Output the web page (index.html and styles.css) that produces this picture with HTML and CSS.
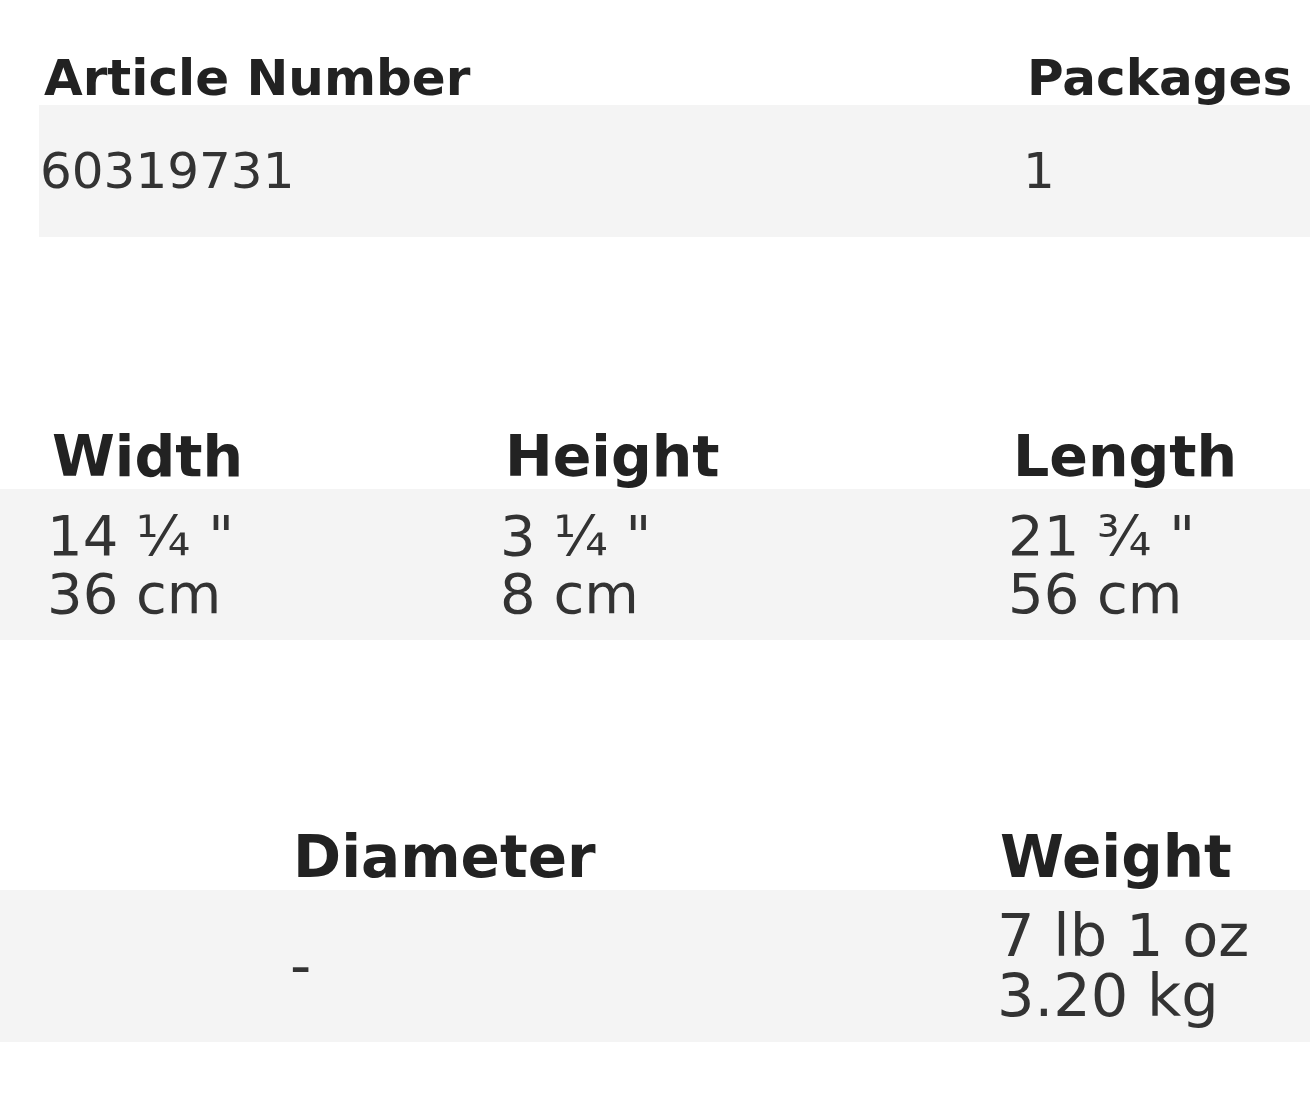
FILE: index.html
```html
<!DOCTYPE html>
<html lang="en">
<head>
<meta charset="utf-8">
<title>Product dimensions</title>
<link rel="stylesheet" href="styles.css">
</head>
<body>
<main class="specs">
  <section class="spec spec-article">
    <div class="row head">
      <div class="cell">Article Number</div>
      <div class="cell">Packages</div>
    </div>
    <div class="row vals">
      <div class="cell">60319731</div>
      <div class="cell">1</div>
    </div>
  </section>

  <section class="spec spec-dims">
    <div class="row head">
      <div class="cell">Width</div>
      <div class="cell">Height</div>
      <div class="cell">Length</div>
    </div>
    <div class="row vals">
      <div class="cell">14 ¼ "<br>36 cm</div>
      <div class="cell">3 ¼ "<br>8 cm</div>
      <div class="cell">21 ¾ "<br>56 cm</div>
    </div>
  </section>

  <section class="spec spec-weight">
    <div class="row head">
      <div class="cell"></div>
      <div class="cell">Diameter</div>
      <div class="cell">Weight</div>
    </div>
    <div class="row vals">
      <div class="cell"></div>
      <div class="cell">-</div>
      <div class="cell">7 lb 1 oz<br>3.20 kg</div>
    </div>
  </section>
</main>
</body>
</html>
```

FILE: styles.css
```css
html, body {
  margin: 0;
  padding: 0;
  background: #ffffff;
}

body {
  font-family: "DejaVu Sans", Verdana, sans-serif;
  color: #333333;
}

.specs {
  display: flex;
  flex-direction: column;
  padding-top: 53px;
}

.row {
  display: grid;
}

.head .cell {
  font-weight: bold;
  color: #222222;
  line-height: 1;
}

.vals {
  background: #f4f4f4;
}

/* Section 1: article number / packages */
.spec-article {
  margin-left: 39px;
}
.spec-article .row {
  grid-template-columns: 983px 1fr;
}
.spec-article .head {
  font-size: 50px;
  margin-bottom: 2px;
}
.spec-article .head .cell {
  padding-left: 5px;
}
.spec-article .vals {
  font-size: 50px;
  line-height: 1;
  padding: 41px 0;
  align-items: center;
}
.spec-article .vals .cell {
  padding-left: 1px;
}

/* Section 2: width / height / length */
.spec-dims {
  margin-top: 191px;
}
.spec-dims .row {
  grid-template-columns: 44px 453px 508px 1fr;
}
.spec-dims .row::before {
  content: "";
}
.spec-dims .head {
  font-size: 57px;
  margin-bottom: 4px;
}
.spec-dims .head .cell {
  padding-left: 8px;
}
.spec-dims .vals {
  font-size: 56px;
  line-height: 58px;
  padding: 18px 0 17px;
}
.spec-dims .vals .cell {
  padding-left: 3px;
}

/* Section 3: diameter / weight */
.spec-weight {
  margin-top: 188px;
}
.spec-weight .row {
  grid-template-columns: 287px 707px 1fr;
}
.spec-weight .head {
  font-size: 58px;
  margin-bottom: 4px;
}
.spec-weight .head .cell {
  padding-left: 6px;
}
.spec-weight .vals {
  font-size: 59px;
  line-height: 60px;
  padding: 16px 0;
  align-items: center;
}
.spec-weight .vals .cell {
  padding-left: 3px;
}
```
